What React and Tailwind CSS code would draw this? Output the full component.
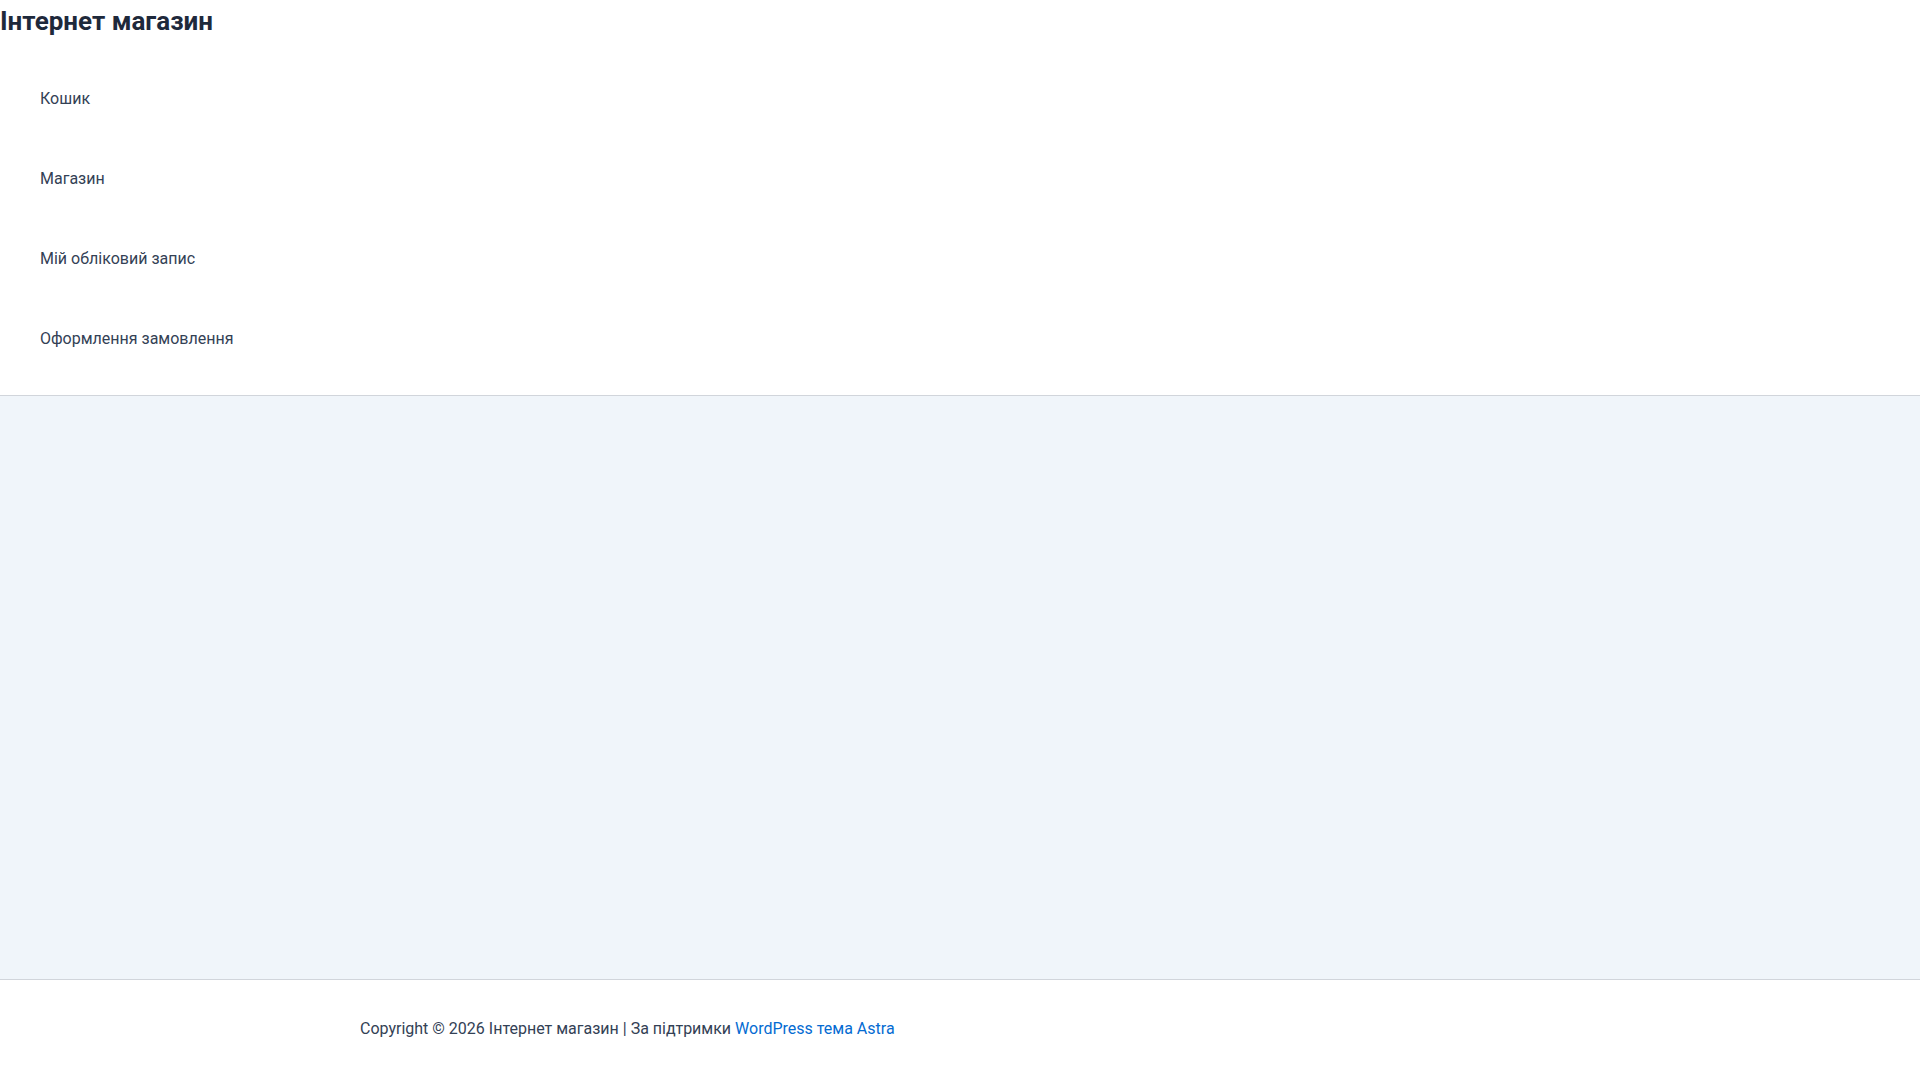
import React from "react";

const navItems = ["Кошик", "Магазин", "Мій обліковий запис", "Оформлення замовлення"];

export default function App() {
  return (
    <div className="min-h-screen bg-white text-[#334155] font-['Roboto','Liberation_Sans',sans-serif]">
      <header className="h-[396px] border-b border-[#d1d5db] bg-white">
        <h1 className="h-[42px] text-[26px] leading-[42px] font-bold text-[#1e293b]">Інтернет магазин</h1>
        <ul className="pt-[17px] pl-[40px]">
          {navItems.map((item) => (
            <li key={item} className="h-[80px] flex items-center text-[16px] leading-[24px] text-[#334155]">
              <a href="#">{item}</a>
            </li>
          ))}
        </ul>
      </header>

      <main className="h-[583px] bg-[#f0f5fa]" />

      <footer className="border-t border-[#d1d5db] bg-white pt-[37px] pb-[40px]">
        <div className="max-w-[1200px] mx-auto text-[16px] leading-[24px] text-[#334155]">
          Copyright © 2026 Інтернет магазин | За підтримки{" "}
          <a href="#" className="text-[#046bd2]">WordPress тема Astra</a>
        </div>
      </footer>
    </div>
  );
}
